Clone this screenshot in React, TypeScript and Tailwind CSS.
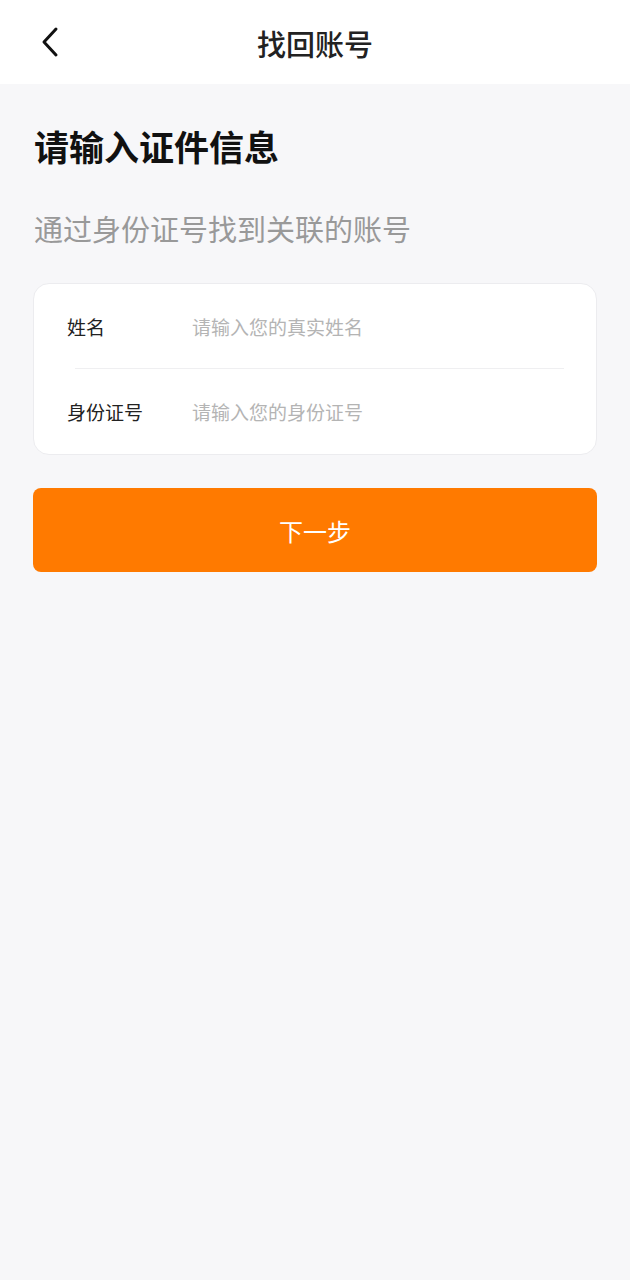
import React from "react";

const font = { fontFamily: '"Noto Sans CJK SC", "Noto Sans", sans-serif' };

export default function App() {
  return (
    <div className="min-h-[1280px] w-full bg-[#f7f7f9]" style={font}>
      <div className="h-[84px] bg-white flex items-center relative">
        <div className="absolute left-[38px] top-[26px]">
          <svg width="24" height="32" viewBox="0 0 24 32" fill="none">
            <path d="M18 3 L6 16 L18 29" stroke="#111" strokeWidth="3" strokeLinecap="round" strokeLinejoin="round" />
          </svg>
        </div>
        <div className="flex-1 text-center text-[29px] font-medium text-[#222] leading-none pt-[2px]">找回账号</div>
      </div>
      <div className="px-[33px]">
        <div className="pt-[39px] text-[35px] font-bold text-[#111] leading-[46px] pl-[1px]">请输入证件信息</div>
        <div className="mt-[40px] text-[29px] text-[#999999] leading-[38px] pl-[1px]">通过身份证号找到关联的账号</div>
        <div className="mt-[36px] bg-white rounded-[16px] border border-[#ececef]">
          <div className="h-[84px] flex items-center px-[33px] pt-[2px]">
            <div className="w-[125px] text-[19px] text-[#222]">姓名</div>
            <div className="text-[19px] text-[#b4b4b4]">请输入您的真实姓名</div>
          </div>
          <div className="h-px bg-[#efeff1] ml-[41px] mr-[32px]" />
          <div className="h-[85px] flex items-center px-[33px] pt-[2px]">
            <div className="w-[125px] text-[19px] text-[#222]">身份证号</div>
            <div className="text-[19px] text-[#b4b4b4]">请输入您的身份证号</div>
          </div>
        </div>
        <div className="mt-[33px] h-[84px] rounded-[8px] bg-[#ff7a00] flex items-center justify-center text-white text-[24px] pt-[2px]">下一步</div>
      </div>
    </div>
  );
}
